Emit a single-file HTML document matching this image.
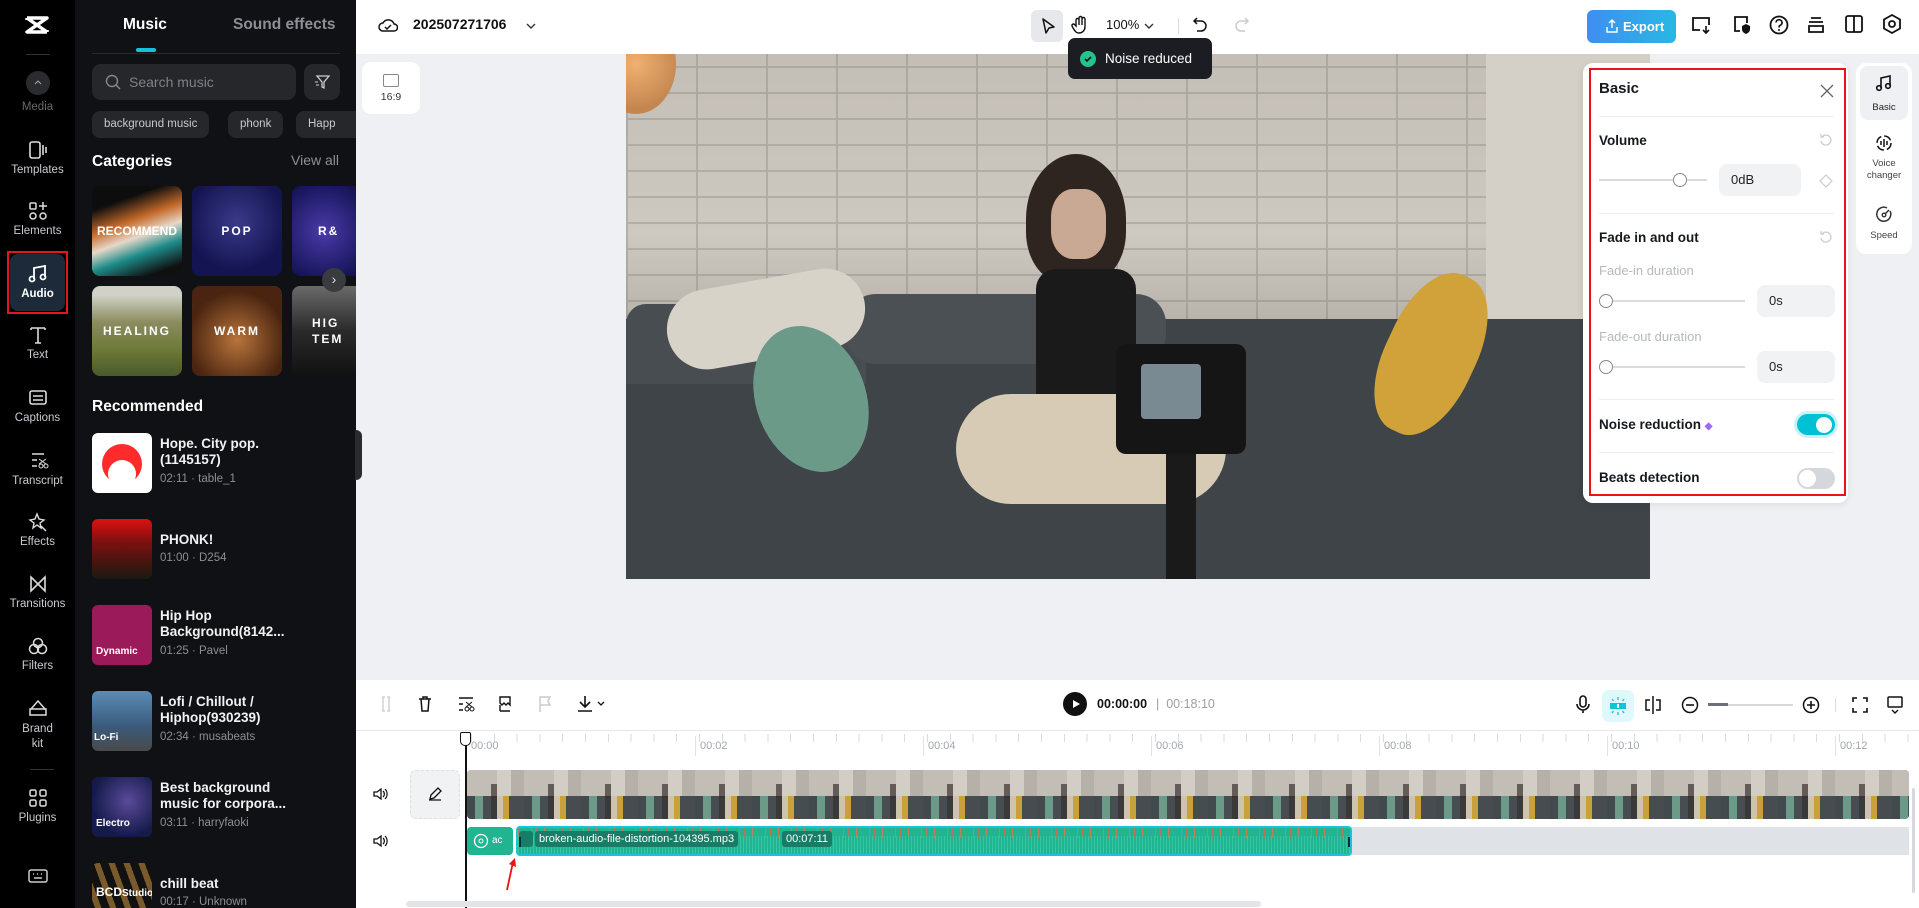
<!DOCTYPE html>
<html><head><meta charset="utf-8">
<style>
*{box-sizing:border-box;margin:0;padding:0}
body{width:1919px;height:908px;overflow:hidden;position:relative;font-family:"Liberation Sans",sans-serif;background:#eef0f3}
.abs{position:absolute}
#rail{left:0;top:0;width:75px;height:908px;background:#000}
.ri{position:absolute;left:0;width:75px;text-align:center;color:#c9cbd0;font-size:11.5px}
.ri svg{display:block;margin:0 auto 4px}
#panel{left:75px;top:0;width:281px;height:908px;background:#101114;overflow:hidden}
.w{color:#fff}
.chip{position:absolute;top:111px;height:27px;border-radius:8px;background:#26272b;color:#c8c9cc;font-size:11.5px;line-height:27px;padding:0 12px}
.tile{position:absolute;width:90px;height:90px;border-radius:8px;overflow:hidden;color:#fff;font-size:12px;letter-spacing:2px;display:flex;align-items:center;justify-content:center;font-weight:bold}
.item{position:absolute;left:17px;width:260px;height:60px}
.item .th{position:absolute;left:0;top:0;width:60px;height:60px;border-radius:6px;overflow:hidden}
.item .t{position:absolute;left:68px;color:#f2f2f2;font-size:13.5px;font-weight:bold;line-height:16px;white-space:nowrap}
.item .m{position:absolute;left:68px;color:#8d8f94;font-size:11.5px}
#top{left:356px;top:0;width:1563px;height:54px;background:#fff}
.ic{position:absolute}
#video{left:626px;top:54px;width:1024px;height:525px;overflow:hidden;background:#a9a49c}
#rp{left:1583px;top:63px;width:265px;height:440px;background:#fff;border-radius:10px;box-shadow:0 2px 8px rgba(0,0,0,.08)}
.lb{position:absolute;left:16px;font-size:13.5px;font-weight:bold;color:#16181d}
.hr{position:absolute;left:16px;right:14px;height:1px;background:#eceef1}
.inp{position:absolute;background:#f1f2f4;border-radius:8px;font-size:13px;color:#222;padding-left:12px}
#tl{left:356px;top:680px;width:1563px;height:228px;background:#fff}
.rl{position:absolute;top:56px;font-size:11px;color:#a3a7ad;padding-left:4px;border-left:1px solid #e1e3e6;height:20px;line-height:20px}
</style></head><body>

<div id="rail" class="abs">
  <svg class="abs" style="left:24px;top:14px" width="26" height="22" viewBox="0 0 26 22"><path d="M3 4h20L3 18h20M3 4l20 14M3 4v2M23 18v-2" stroke="#fff" stroke-width="3.5" fill="none" stroke-linejoin="round"/></svg>
  <div class="abs" style="left:26px;top:54px;width:24px;height:1px;background:#333"></div>
  <div class="abs" style="left:26px;top:71px;width:24px;height:24px;border-radius:50%;background:#2a2b2f"></div>
  <svg class="abs" style="left:33px;top:78px" width="10" height="8"><path d="M2 6l3-3 3 3" stroke="#aaa" fill="none"/></svg>
  <div class="ri" style="top:101px;color:#66686d">Media</div>
  <div class="ri" style="top:140px"><svg width="22" height="20"><rect x="3" y="2" width="10" height="16" rx="2" stroke="#ddd" stroke-width="1.6" fill="none"/><path d="M16 5v10M19 7v6" stroke="#ddd" stroke-width="1.6"/></svg>Templates</div>
  <div class="ri" style="top:201px"><svg width="22" height="20"><rect x="3" y="2" width="6" height="6" rx="1" stroke="#ddd" stroke-width="1.5" fill="none"/><path d="M16 1v8M12 5h8" stroke="#ddd" stroke-width="1.5"/><circle cx="6" cy="15" r="3" stroke="#ddd" stroke-width="1.5" fill="none"/><circle cx="16" cy="15" r="3" stroke="#ddd" stroke-width="1.5" fill="none"/></svg>Elements</div>
  <div class="abs" style="left:7px;top:251px;width:61px;height:63px;border:2px solid #e8141b"></div>
  <div class="abs" style="left:10px;top:254px;width:55px;height:57px;border-radius:8px;background:#1d2a3a"></div>
  <div class="ri" style="top:264px;color:#fff;font-weight:bold"><svg width="22" height="20"><path d="M7 15V4l11-2v11" stroke="#fff" stroke-width="1.8" fill="none"/><circle cx="5" cy="15" r="2.5" stroke="#fff" stroke-width="1.8" fill="none"/><circle cx="16" cy="13" r="2.5" stroke="#fff" stroke-width="1.8" fill="none"/></svg>Audio</div>
  <div class="ri" style="top:325px"><svg width="22" height="20"><path d="M4 3h14M11 3v15M8 18h6M4 3v2M18 3v2" stroke="#ddd" stroke-width="1.6" fill="none"/></svg>Text</div>
  <div class="ri" style="top:388px"><svg width="22" height="20"><rect x="3" y="3" width="16" height="13" rx="2" stroke="#ddd" stroke-width="1.6" fill="none"/><path d="M6 8h10M6 12h10" stroke="#ddd" stroke-width="1.4"/></svg>Captions</div>
  <div class="ri" style="top:451px"><svg width="22" height="20"><path d="M5 3h12M5 9h5M5 15h5" stroke="#ddd" stroke-width="1.5"/><circle cx="14" cy="15" r="2" stroke="#ddd" fill="none"/><circle cx="19" cy="15" r="2" stroke="#ddd" fill="none"/><path d="M12 8l7 5M19 8l-7 5" stroke="#ddd"/></svg>Transcript</div>
  <div class="ri" style="top:512px"><svg width="22" height="20"><path d="M10 2l2 5 5 1-4 3 1 5-4-3-4 3 1-5-4-3 5-1z" stroke="#ddd" stroke-width="1.4" fill="none"/><path d="M14 14l5 5" stroke="#ddd" stroke-width="1.5"/></svg>Effects</div>
  <div class="ri" style="top:574px"><svg width="22" height="20"><path d="M4 3v14l14-14v14z" stroke="#ddd" stroke-width="1.6" fill="none"/></svg>Transitions</div>
  <div class="ri" style="top:636px"><svg width="22" height="20"><circle cx="11" cy="7" r="4.5" stroke="#ddd" stroke-width="1.5" fill="none"/><circle cx="7" cy="13" r="4.5" stroke="#ddd" stroke-width="1.5" fill="none"/><circle cx="15" cy="13" r="4.5" stroke="#ddd" stroke-width="1.5" fill="none"/></svg>Filters</div>
  <div class="ri" style="top:698px;line-height:15px"><svg width="22" height="20"><path d="M4 11l7-8 7 8M3 11h16v6H3z" stroke="#ddd" stroke-width="1.5" fill="none"/></svg>Brand<br>kit</div>
  <div class="abs" style="left:30px;top:769px;width:24px;height:1px;background:#333"></div>
  <div class="ri" style="top:788px"><svg width="22" height="20"><rect x="3" y="2" width="6" height="6" rx="1.5" stroke="#ddd" stroke-width="1.5" fill="none"/><rect x="13" y="2" width="6" height="6" rx="1.5" stroke="#ddd" stroke-width="1.5" fill="none"/><rect x="3" y="12" width="6" height="6" rx="1.5" stroke="#ddd" stroke-width="1.5" fill="none"/><rect x="13" y="12" width="6" height="6" rx="1.5" stroke="#ddd" stroke-width="1.5" fill="none"/></svg>Plugins</div>
  <svg class="abs" style="left:28px;top:868px" width="20" height="16"><rect x="1" y="2" width="18" height="12" rx="2" stroke="#ccc" stroke-width="1.5" fill="none"/><path d="M5 6h1M9 6h1M13 6h1M6 10h8" stroke="#ccc" stroke-width="1.5"/></svg>
</div>

<div id="panel" class="abs">
  <div class="abs w" style="left:48px;top:16px;font-size:15.5px;font-weight:bold">Music</div>
  <div class="abs" style="left:158px;top:16px;font-size:15.5px;font-weight:bold;color:#8d8f94">Sound effects</div>
  <div class="abs" style="left:61px;top:48px;width:20px;height:4px;border-radius:2px;background:#16c0d8"></div>
  <div class="abs" style="left:17px;top:53px;width:248px;height:1px;background:#26272b"></div>
  <div class="abs" style="left:17px;top:64px;width:204px;height:36px;border-radius:9px;background:#26272b"></div>
  <svg class="abs" style="left:30px;top:74px" width="16" height="16"><circle cx="7" cy="7" r="5.5" stroke="#888" stroke-width="1.4" fill="none"/><path d="M11 11l4 4" stroke="#888" stroke-width="1.4"/></svg>
  <div class="abs" style="left:54px;top:74px;color:#7f8186;font-size:14px">Search music</div>
  <div class="abs" style="left:229px;top:64px;width:36px;height:36px;border-radius:9px;background:#26272b"></div>
  <svg class="abs" style="left:239px;top:74px" width="16" height="16"><path d="M3 2h12l-5 6v6l-2-1V8z" stroke="#ccc" stroke-width="1.3" fill="none"/><path d="M1 8h3M2 11h3" stroke="#ccc"/></svg>
  <div class="chip" style="left:17px">background music</div>
  <div class="chip" style="left:153px">phonk</div>
  <div class="chip" style="left:221px;width:60px;overflow:hidden;border-radius:8px 0 0 8px">Happ</div>
  <div class="abs w" style="left:17px;top:153px;font-size:15.5px;font-weight:bold">Categories</div>
  <div class="abs" style="left:216px;top:152px;font-size:14px;color:#8d8f94">View all</div>
  <div class="tile" style="left:17px;top:186px;background:linear-gradient(160deg,#0d0d0d 20%,#c56a2a 40%,#e6d8c9 55%,#1e8c8a 70%,#101010 90%);letter-spacing:0">RECOMMEND</div>
  <div class="tile" style="left:117px;top:186px;background:radial-gradient(circle at 50% 40%,#3a3a8a,#141452 70%)">POP</div>
  <div class="tile" style="left:217px;top:186px;width:64px;border-radius:8px 0 0 8px;background:radial-gradient(circle,#4a3aa8,#101050);justify-content:flex-start;padding-left:26px">R&amp;</div>
  <div class="tile" style="left:17px;top:286px;background:linear-gradient(180deg,#d0d2c8 10%,#8c8c60 40%,#6e7a38 70%,#4a5a2a)">HEALING</div>
  <div class="tile" style="left:117px;top:286px;background:radial-gradient(circle at 50% 60%,#b8743a,#4a2410 70%)">WARM</div>
  <div class="tile" style="left:217px;top:286px;width:64px;border-radius:8px 0 0 8px;background:linear-gradient(180deg,#6a6a6a,#2a2a2a 50%,#111);justify-content:flex-start;padding-left:20px;text-align:left;line-height:16px">HIG<br>TEM</div>
  <div class="abs" style="left:247px;top:268px;width:24px;height:24px;border-radius:50%;background:#3a3b3f;color:#ddd;font-size:14px;text-align:center;line-height:22px">›</div>
  <div class="abs w" style="left:17px;top:398px;font-size:15.5px;font-weight:bold">Recommended</div>

  <div class="item" style="top:433px"><div class="th" style="background:#fff"><svg width="60" height="60"><circle cx="30" cy="31" r="20" fill="#ff2a2a"/><ellipse cx="30" cy="41" rx="14" ry="14" fill="#fff"/></svg></div><div class="t" style="top:3px">Hope. City pop.<br>(1145157)</div><div class="m" style="top:40px">02:11 · table_1</div></div>
  <div class="item" style="top:519px"><div class="th" style="background:linear-gradient(180deg,#d11 0%,#7a1010 40%,#1a1a10 100%)"></div><div class="t" style="top:13px">PHONK!</div><div class="m" style="top:33px">01:00 · D254</div></div>
  <div class="item" style="top:605px"><div class="th" style="background:#9a1a5a;color:#fff;font-size:10px;font-weight:bold"><span style="position:absolute;left:4px;top:41px">Dynamic</span></div><div class="t" style="top:3px">Hip Hop<br>Background(8142...</div><div class="m" style="top:40px">01:25 · Pavel</div></div>
  <div class="item" style="top:691px"><div class="th" style="background:linear-gradient(180deg,#5a8cb8,#3a5a7a 60%,#4a4a4a);color:#fff;font-size:10px;font-weight:bold"><span style="position:absolute;left:2px;top:41px">Lo-Fi</span></div><div class="t" style="top:3px">Lofi / Chillout /<br>Hiphop(930239)</div><div class="m" style="top:40px">02:34 · musabeats</div></div>
  <div class="item" style="top:777px"><div class="th" style="background:radial-gradient(circle at 60% 40%,#5a4a9a,#141a4a 70%);color:#fff;font-size:10px;font-weight:bold"><span style="position:absolute;left:4px;top:41px">Electro</span></div><div class="t" style="top:3px">Best background<br>music for corpora...</div><div class="m" style="top:40px">03:11 · harryfaoki</div></div>
  <div class="item" style="top:863px"><div class="th" style="background:repeating-linear-gradient(70deg,#111 0 8px,#7a5a2a 8px 14px);color:#fff;font-size:12px;font-weight:bold"><span style="position:absolute;left:4px;top:22px">BCD<small>Studio</small></span></div><div class="t" style="top:13px">chill beat</div><div class="m" style="top:33px">00:17 · Unknown</div></div>
</div>
<div class="abs" style="left:355px;top:430px;width:7px;height:50px;background:#2a2b2f;border-radius:0 6px 6px 0"></div>

<div id="top" class="abs">
  <svg class="ic" style="left:22px;top:16px" width="20" height="18"><path d="M5 15a4 4 0 0 1 0-8 6 6 0 0 1 11 1 3.5 3.5 0 0 1 0 7z" stroke="#111" stroke-width="1.5" fill="none"/><path d="M7 11l2 2 4-4" stroke="#111" stroke-width="1.5" fill="none"/></svg>
  <div class="abs" style="left:57px;top:16px;font-size:14px;font-weight:bold;color:#111">202507271706</div>
  <svg class="ic" style="left:170px;top:22px" width="10" height="8"><path d="M1 2l4 4 4-4" stroke="#333" stroke-width="1.4" fill="none"/></svg>
  <div class="abs" style="left:675px;top:10px;width:32px;height:32px;border-radius:6px;background:#e6e8eb"></div>
  <svg class="ic" style="left:684px;top:17px" width="16" height="18"><path d="M3 2l11 8-5 1-3 5z" stroke="#111" stroke-width="1.5" fill="none" stroke-linejoin="round"/></svg>
  <svg class="ic" style="left:715px;top:15px" width="18" height="20"><path d="M5 11V5a1.5 1.5 0 0 1 3 0v5V3a1.5 1.5 0 0 1 3 0v7V4a1.5 1.5 0 0 1 3 0v8a6 6 0 0 1-6 6c-3 0-4-2-6-5l-1-2a1.5 1.5 0 0 1 2.5-1.5z" stroke="#111" stroke-width="1.4" fill="none"/></svg>
  <div class="abs" style="left:750px;top:17px;font-size:13px;color:#111">100%</div>
  <svg class="ic" style="left:788px;top:22px" width="10" height="8"><path d="M1 2l4 4 4-4" stroke="#333" stroke-width="1.4" fill="none"/></svg>
  <div class="abs" style="left:822px;top:18px;width:1px;height:16px;background:#ddd"></div>
  <svg class="ic" style="left:836px;top:16px" width="16" height="18"><path d="M5 2L2 5l3 3M2 5h7a5 5 0 0 1 0 10H5" stroke="#111" stroke-width="1.5" fill="none"/></svg>
  <svg class="ic" style="left:878px;top:16px" width="16" height="18"><path d="M11 2l3 3-3 3M14 5H7a5 5 0 0 0 0 10h4" stroke="#ccc" stroke-width="1.5" fill="none"/></svg>
  <div class="abs" style="left:1231px;top:10px;width:89px;height:33px;border-radius:6px;background:linear-gradient(90deg,#3f8ef0,#28b8e4);color:#fff;font-size:13px;font-weight:bold;line-height:33px;padding-left:36px">Export</div>
  <svg class="ic" style="left:1249px;top:18px" width="14" height="16"><path d="M7 10V2M4 5l3-3 3 3M2 9v5h10V9" stroke="#fff" stroke-width="1.4" fill="none"/></svg>
  <svg class="ic" style="left:1334px;top:15px" width="22" height="20"><path d="M10 15H3V3h16v7" stroke="#111" stroke-width="1.8" fill="none"/><path d="M16 11v7M13 15l3 3 3-3" stroke="#111" stroke-width="1.6" fill="none"/></svg>
  <svg class="ic" style="left:1375px;top:14px" width="22" height="22"><path d="M9 17H4V3h12v6" stroke="#111" stroke-width="1.8" fill="none"/><path d="M15 10l4 2v3c0 3-2 4-4 5-2-1-4-2-4-5v-3z" fill="#111"/></svg>
  <svg class="ic" style="left:1412px;top:14px" width="22" height="22"><circle cx="11" cy="11" r="8.5" stroke="#111" stroke-width="1.8" fill="none"/><path d="M8 8.5a3 3 0 1 1 4 3c-1 .5-1 1-1 2" stroke="#111" stroke-width="1.7" fill="none"/><circle cx="11" cy="16" r="1" fill="#111"/></svg>
  <svg class="ic" style="left:1450px;top:15px" width="20" height="20"><path d="M5 3h10M3 7h14M3 11h14v6H3z" stroke="#111" stroke-width="1.8" fill="none"/></svg>
  <svg class="ic" style="left:1488px;top:14px" width="20" height="20"><rect x="2" y="2" width="16" height="16" rx="2" stroke="#111" stroke-width="1.8" fill="none"/><path d="M10 2v16" stroke="#111" stroke-width="1.8"/></svg>
  <svg class="ic" style="left:1525px;top:13px" width="22" height="22"><path d="M11 2l8 4.5v9L11 20l-8-4.5v-9z" stroke="#111" stroke-width="1.8" fill="none"/><circle cx="11" cy="11" r="3" stroke="#111" stroke-width="1.8" fill="none"/></svg>
</div>

<div class="abs" style="left:362px;top:62px;width:58px;height:52px;background:#fff;border-radius:9px;text-align:center">
  <div style="width:16px;height:13px;border:1.3px solid #888;border-radius:2px;margin:12px auto 4px"></div>
  <div style="font-size:10.5px;color:#333">16:9</div>
</div>

<div id="video" class="abs">
  <div class="abs" style="left:0;top:0;width:1024px;height:300px;background:linear-gradient(180deg,#c3beb6,#cdc8c0 60%,#b0aba3);"></div>
  <div class="abs" style="left:0;top:0;width:1024px;height:300px;opacity:.25;background:repeating-linear-gradient(0deg,#666 0 2px,transparent 2px 26px),repeating-linear-gradient(90deg,#666 0 2px,transparent 2px 70px)"></div>
  <div class="abs" style="left:-30px;top:-40px;width:80px;height:100px;border-radius:50%;background:radial-gradient(circle,#f0b070,#c48650 70%)"></div>
  <div class="abs" style="left:860px;top:0;width:164px;height:300px;background:#d4cfc7"></div>
  <div class="abs" style="left:0;top:265px;width:1024px;height:260px;background:#3e4448"></div>
  <div class="abs" style="left:0;top:250px;width:240px;height:80px;background:#474d51;border-radius:20px 20px 0 0"></div>
  <div class="abs" style="left:220px;top:240px;width:320px;height:70px;background:#4a5054;border-radius:30px"></div>
  <div class="abs" style="left:40px;top:225px;width:200px;height:80px;background:#d8d3c9;border-radius:40px;transform:rotate(-10deg)"></div>
  <div class="abs" style="left:130px;top:270px;width:110px;height:150px;background:#6b9a88;border-radius:50%;transform:rotate(-20deg)"></div>
  <div class="abs" style="left:760px;top:215px;width:90px;height:170px;background:#d1a13a;border-radius:45%;transform:rotate(25deg)"></div>
  <div class="abs" style="left:400px;top:100px;width:100px;height:130px;background:#2e2520;border-radius:50% 50% 40% 40%"></div>
  <div class="abs" style="left:425px;top:135px;width:55px;height:70px;background:#c9a894;border-radius:40%"></div>
  <div class="abs" style="left:410px;top:215px;width:100px;height:150px;background:#1a1a1a;border-radius:20px 20px 10px 10px"></div>
  <div class="abs" style="left:330px;top:340px;width:270px;height:110px;background:#d8cbb6;border-radius:55px"></div>
  <div class="abs" style="left:490px;top:290px;width:130px;height:110px;background:#151515;border-radius:10px"></div>
  <div class="abs" style="left:515px;top:310px;width:60px;height:55px;background:#7a8a92;border-radius:4px"></div>
  <div class="abs" style="left:540px;top:400px;width:30px;height:125px;background:#1a1a1a"></div>
</div>

<div class="abs" style="left:1068px;top:38px;width:144px;height:41px;background:#1c1d22;border-radius:7px"></div>
<div class="abs" style="left:1080px;top:51px;width:16px;height:16px;border-radius:50%;background:#22c38e"></div>
<svg class="abs" style="left:1083px;top:54px" width="10" height="10"><path d="M2 5l2 2 4-4" stroke="#111" stroke-width="1.6" fill="none"/></svg>
<div class="abs" style="left:1105px;top:51px;color:#fff;font-size:13.5px">Noise reduced</div>

<div id="rp" class="abs">
  <div class="abs" style="left:6px;top:5px;width:257px;height:428px;border:2px solid #e8141b"></div>
  <div class="lb" style="top:17px;font-size:15px">Basic</div>
  <svg class="abs" style="left:237px;top:21px" width="14" height="14"><path d="M1 1l12 12M13 1L1 13" stroke="#666" stroke-width="1.3"/></svg>
  <div class="hr" style="top:53px"></div>
  <div class="lb" style="top:70px">Volume</div>
  <svg class="abs" style="left:236px;top:70px" width="14" height="14"><path d="M3 4a5 5 0 1 1-1 4M2 1v3h3" stroke="#ccc" stroke-width="1.3" fill="none"/></svg>
  <div class="abs" style="left:16px;top:116px;width:108px;height:2px;background:#d9dbe0"></div>
  <div class="abs" style="left:90px;top:110px;width:14px;height:14px;border-radius:50%;background:#fff;border:1.5px solid #888"></div>
  <div class="inp" style="left:136px;top:101px;width:82px;height:32px;line-height:32px">0dB</div>
  <svg class="abs" style="left:236px;top:111px" width="14" height="14"><path d="M7 1l6 6-6 6-6-6z" stroke="#ccc" stroke-width="1.2" fill="none"/></svg>
  <div class="hr" style="top:150px"></div>
  <div class="lb" style="top:167px">Fade in and out</div>
  <svg class="abs" style="left:236px;top:167px" width="14" height="14"><path d="M3 4a5 5 0 1 1-1 4M2 1v3h3" stroke="#ccc" stroke-width="1.3" fill="none"/></svg>
  <div class="abs" style="left:16px;top:200px;font-size:13px;color:#b6b9be">Fade-in duration</div>
  <div class="abs" style="left:16px;top:237px;width:146px;height:2px;background:#d9dbe0"></div>
  <div class="abs" style="left:16px;top:231px;width:14px;height:14px;border-radius:50%;background:#fff;border:1.5px solid #888"></div>
  <div class="inp" style="left:174px;top:222px;width:78px;height:32px;line-height:32px">0s</div>
  <div class="abs" style="left:16px;top:266px;font-size:13px;color:#b6b9be">Fade-out duration</div>
  <div class="abs" style="left:16px;top:303px;width:146px;height:2px;background:#d9dbe0"></div>
  <div class="abs" style="left:16px;top:297px;width:14px;height:14px;border-radius:50%;background:#fff;border:1.5px solid #888"></div>
  <div class="inp" style="left:174px;top:288px;width:78px;height:32px;line-height:32px">0s</div>
  <div class="hr" style="top:336px"></div>
  <div class="lb" style="top:354px">Noise reduction <span style="color:#9a6af0;font-size:10px">◆</span></div>
  <div class="abs" style="left:214px;top:351px;width:38px;height:21px;border-radius:11px;background:#00c1d4;box-shadow:0 0 0 3px #c8f2f6"></div>
  <div class="abs" style="left:233px;top:354px;width:16px;height:16px;border-radius:50%;background:#fff"></div>
  <div class="hr" style="top:389px"></div>
  <div class="lb" style="top:407px">Beats detection</div>
  <div class="abs" style="left:214px;top:405px;width:38px;height:21px;border-radius:11px;background:#d4d7dc"></div>
  <div class="abs" style="left:216px;top:407px;width:17px;height:17px;border-radius:50%;background:#fff"></div>
</div>
<div class="abs" style="left:1856px;top:63px;width:56px;height:191px;background:#fff;border-radius:10px"></div>
<div class="abs" style="left:1860px;top:66px;width:48px;height:54px;background:#eef0f3;border-radius:8px"></div>
<svg class="abs" style="left:1875px;top:74px" width="18" height="18"><path d="M6 14V4l9-2v10" stroke="#111" stroke-width="1.6" fill="none"/><circle cx="4" cy="14" r="2.3" stroke="#111" stroke-width="1.6" fill="none"/><circle cx="13" cy="12" r="2.3" stroke="#111" stroke-width="1.6" fill="none"/></svg>
<div class="abs" style="left:1856px;top:102px;width:56px;text-align:center;font-size:9.5px;color:#222">Basic</div>
<svg class="abs" style="left:1875px;top:134px" width="18" height="18"><circle cx="9" cy="9" r="7" stroke="#111" stroke-width="1.5" fill="none" stroke-dasharray="8 3"/><path d="M6 7v4M9 5v8M12 7v4" stroke="#111" stroke-width="1.5"/></svg>
<div class="abs" style="left:1856px;top:158px;width:56px;text-align:center;font-size:9.5px;color:#444;line-height:12px">Voice<br>changer</div>
<svg class="abs" style="left:1875px;top:205px" width="18" height="18"><path d="M15 6a7 7 0 1 1-3-3" stroke="#333" stroke-width="1.5" fill="none"/><circle cx="9" cy="10" r="1.8" stroke="#333" stroke-width="1.4" fill="none"/><path d="M10 9l4-4" stroke="#333" stroke-width="1.5"/></svg>
<div class="abs" style="left:1856px;top:230px;width:56px;text-align:center;font-size:9.5px;color:#444">Speed</div>

<div id="tl" class="abs">
  <svg class="ic" style="left:23px;top:15px" width="14" height="18"><path d="M3 2h3M3 16h3M4 2v14M8 2h3M8 16h3M10 2v14" stroke="#ccc" stroke-width="1.3" fill="none"/></svg>
  <svg class="ic" style="left:61px;top:15px" width="16" height="18"><path d="M2 4h12M6 4V2h4v2M4 4l1 12h6l1-12" stroke="#111" stroke-width="1.5" fill="none"/></svg>
  <svg class="ic" style="left:101px;top:15px" width="18" height="18"><path d="M2 3h14M2 9h4M2 15h4" stroke="#111" stroke-width="1.5"/><circle cx="10" cy="14" r="2" stroke="#111" fill="none"/><circle cx="15" cy="14" r="2" stroke="#111" fill="none"/><path d="M9 7l6 5M15 7l-6 5" stroke="#111"/></svg>
  <svg class="ic" style="left:141px;top:15px" width="16" height="18"><path d="M3 2h10v8l-2-2-2 2-2-2-2 2-2-2zM3 10v6M3 16h10" stroke="#111" stroke-width="1.4" fill="none"/></svg>
  <svg class="ic" style="left:181px;top:15px" width="16" height="18"><path d="M3 17V2h10l-2 4 2 4H3" stroke="#ccc" stroke-width="1.5" fill="none"/></svg>
  <svg class="ic" style="left:220px;top:14px" width="32" height="20"><path d="M9 2v11M4 8l5 5 5-5M2 17h14" stroke="#111" stroke-width="1.6" fill="none"/><path d="M22 8l3 3 3-3" stroke="#111" stroke-width="1.3" fill="none"/></svg>
  <div class="abs" style="left:707px;top:12px;width:24px;height:24px;border-radius:50%;background:#111"></div>
  <svg class="ic" style="left:715px;top:19px" width="10" height="10"><path d="M2 1l7 4-7 4z" fill="#fff"/></svg>
  <div class="abs" style="left:741px;top:17px;font-size:12.5px;font-weight:bold;color:#111">00:00:00</div>
  <div class="abs" style="left:800px;top:17px;font-size:12.5px;color:#9aa0a6">| &nbsp;00:18:10</div>
  <svg class="ic" style="left:1219px;top:14px" width="16" height="22"><rect x="5" y="2" width="6" height="11" rx="3" stroke="#111" stroke-width="1.6" fill="none"/><path d="M2 10a6 6 0 0 0 12 0M8 16v3" stroke="#111" stroke-width="1.6" fill="none"/></svg>
  <div class="abs" style="left:1246px;top:10px;width:32px;height:32px;border-radius:7px;background:#dff8fb"></div>
  <svg class="ic" style="left:1251px;top:15px" width="22" height="22"><rect x="3" y="8" width="16" height="6" fill="#10c4d8"/><rect x="10" y="9" width="2" height="4" fill="#fff"/><path d="M11 2v3M11 17v3M5 4l1.5 2M17 4l-1.5 2M5 18l1.5-2M17 18l-1.5-2" stroke="#10c4d8" stroke-width="1.3"/></svg>
  <svg class="ic" style="left:1287px;top:15px" width="20" height="20"><path d="M10 1v18M7 5H3v10h4M13 5h4v10h-4" stroke="#111" stroke-width="1.5" fill="none"/></svg>
  <svg class="ic" style="left:1325px;top:16px" width="18" height="18"><circle cx="9" cy="9" r="7.5" stroke="#111" stroke-width="1.5" fill="none"/><path d="M5 9h8" stroke="#111" stroke-width="1.6"/></svg>
  <div class="abs" style="left:1352px;top:24px;width:85px;height:2px;background:#d5d8dd"></div>
  <div class="abs" style="left:1352px;top:23px;width:20px;height:3px;background:#6b7079"></div>
  <svg class="ic" style="left:1446px;top:16px" width="18" height="18"><circle cx="9" cy="9" r="7.5" stroke="#111" stroke-width="1.5" fill="none"/><path d="M5 9h8M9 5v8" stroke="#111" stroke-width="1.6"/></svg>
  <div class="abs" style="left:1479px;top:18px;width:1px;height:14px;background:#ddd"></div>
  <svg class="ic" style="left:1495px;top:16px" width="18" height="18"><path d="M2 6V2h4M12 2h4v4M16 12v4h-4M6 16H2v-4" stroke="#111" stroke-width="1.6" fill="none"/></svg>
  <svg class="ic" style="left:1530px;top:15px" width="18" height="20"><rect x="2" y="2" width="14" height="10" rx="1" stroke="#111" stroke-width="1.5" fill="none"/><path d="M6 15l3 3 3-3" stroke="#111" stroke-width="1.4" fill="none"/></svg>
  <div class="abs" style="left:0;top:50px;width:1563px;height:1px;background:#e4e6e9"></div>
  <div class="abs" style="left:115px;top:54px;width:1448px;height:8px;background:repeating-linear-gradient(90deg,#d9dbde 0 1px,transparent 1px 22.8px)"></div>
  <div class="rl" style="left:111px;border-left:none">00:00</div>
  <div class="rl" style="left:339px">00:02</div>
  <div class="rl" style="left:567px">00:04</div>
  <div class="rl" style="left:795px">00:06</div>
  <div class="rl" style="left:1023px">00:08</div>
  <div class="rl" style="left:1251px">00:10</div>
  <div class="rl" style="left:1479px">00:12</div>
  <svg class="ic" style="left:16px;top:106px" width="16" height="16"><path d="M2 6h3l4-3v10l-4-3H2z" stroke="#111" stroke-width="1.3" fill="none"/><path d="M11 5a4 4 0 0 1 0 6M13 3a7 7 0 0 1 0 10" stroke="#111" stroke-width="1.2" fill="none"/></svg>
  <svg class="ic" style="left:16px;top:153px" width="16" height="16"><path d="M2 6h3l4-3v10l-4-3H2z" stroke="#111" stroke-width="1.3" fill="none"/><path d="M11 5a4 4 0 0 1 0 6M13 3a7 7 0 0 1 0 10" stroke="#111" stroke-width="1.2" fill="none"/></svg>
  <div class="abs" style="left:54px;top:90px;width:50px;height:49px;border-radius:6px;background:#f1f2f4;border:1px dashed #dcdfe3"></div>
  <svg class="ic" style="left:71px;top:106px" width="16" height="16"><path d="M3 13l1-4 7-7 3 3-7 7zM2 14h12" stroke="#111" stroke-width="1.3" fill="none"/></svg>
  <!-- video track -->
  <div class="abs" style="left:111px;top:90px;width:1442px;height:49px;border-radius:4px;overflow:hidden;background:#bdb8b0">
    <div style="position:absolute;left:0;top:0;width:100%;height:26px;background:repeating-linear-gradient(90deg,#c2bdb5 0 30px,#d2cdc5 30px 44px,#b5b0a8 44px 57px)"></div>
    <div style="position:absolute;left:0;top:26px;width:100%;height:23px;background:repeating-linear-gradient(90deg,#434a4e 0 8px,#6b9a88 8px 16px,#474d51 16px 24px,#3a3a3a 24px 30px,#d0c3ae 30px 36px,#c9a03a 36px 42px,#464c50 42px 57px)"></div>
    <div style="position:absolute;left:0;top:14px;width:100%;height:14px;background:repeating-linear-gradient(90deg,transparent 0 24px,#3a3230 24px 30px,transparent 30px 57px);opacity:.7"></div>
  </div>
  <!-- audio track -->
  <div class="abs" style="left:995px;top:147px;width:558px;height:28px;background:#dfe2e6"></div>
  <div class="abs" style="left:111px;top:147px;width:46px;height:28px;border-radius:4px;background:#20b491"></div>
  <svg class="ic" style="left:117px;top:153px" width="16" height="16"><circle cx="8" cy="8" r="6.5" stroke="#fff" stroke-width="1.3" fill="none"/><circle cx="8" cy="8" r="2" stroke="#fff" fill="none"/></svg>
  <div class="abs" style="left:136px;top:155px;font-size:10px;color:#fff">ac</div>
  <div class="abs" style="left:160px;top:146px;width:836px;height:30px;border-radius:4px;background:#20b491;border:2px solid #18c4d8;overflow:hidden">
    <div style="position:absolute;left:0;top:0;width:100%;height:10px;background:repeating-linear-gradient(90deg,#e8744a 0 1px,transparent 1px 5px,#d86a44 5px 6px,transparent 6px 13px);opacity:.8"></div>
    <div style="position:absolute;left:0;top:8px;width:100%;height:20px;background:repeating-linear-gradient(90deg,#35c6a4 0 1px,transparent 1px 3px)"></div>
  </div>
  <div class="abs" style="left:163px;top:151px;width:14px;height:16px;background:#187d66;border-radius:3px"></div>
  <div class="abs" style="left:179px;top:151px;height:16px;padding:0 4px;background:#187d66;border-radius:3px;font-size:11px;color:#fff;line-height:16px">broken-audio-file-distortion-104395.mp3</div>
  <div class="abs" style="left:426px;top:151px;height:16px;padding:0 4px;background:#187d66;border-radius:3px;font-size:11px;color:#fff;line-height:16px">00:07:11</div>
  <div class="abs" style="left:163px;top:157px;width:2px;height:10px;background:#0a2a3a"></div>
  <div class="abs" style="left:992px;top:157px;width:2px;height:10px;background:#0a2a3a"></div>
  <svg class="ic" style="left:148px;top:176px" width="14" height="36"><path d="M3 34L9 6" stroke="#ee1111" stroke-width="1.8"/><path d="M5 8l6-6 1 9z" fill="#ee1111"/></svg>
  <div class="abs" style="left:109px;top:57px;width:2px;height:171px;background:#111"></div>
  <div class="abs" style="left:104px;top:52px;width:11px;height:14px;border:1.5px solid #111;border-radius:2px 2px 5px 5px;background:#fff"></div>
  <div class="abs" style="left:50px;top:221px;width:855px;height:6px;border-radius:3px;background:#e3e5e8"></div>
  <div class="abs" style="left:1556px;top:108px;width:3px;height:105px;border-radius:2px;background:#d5d8dc"></div>
</div>
</body></html>
